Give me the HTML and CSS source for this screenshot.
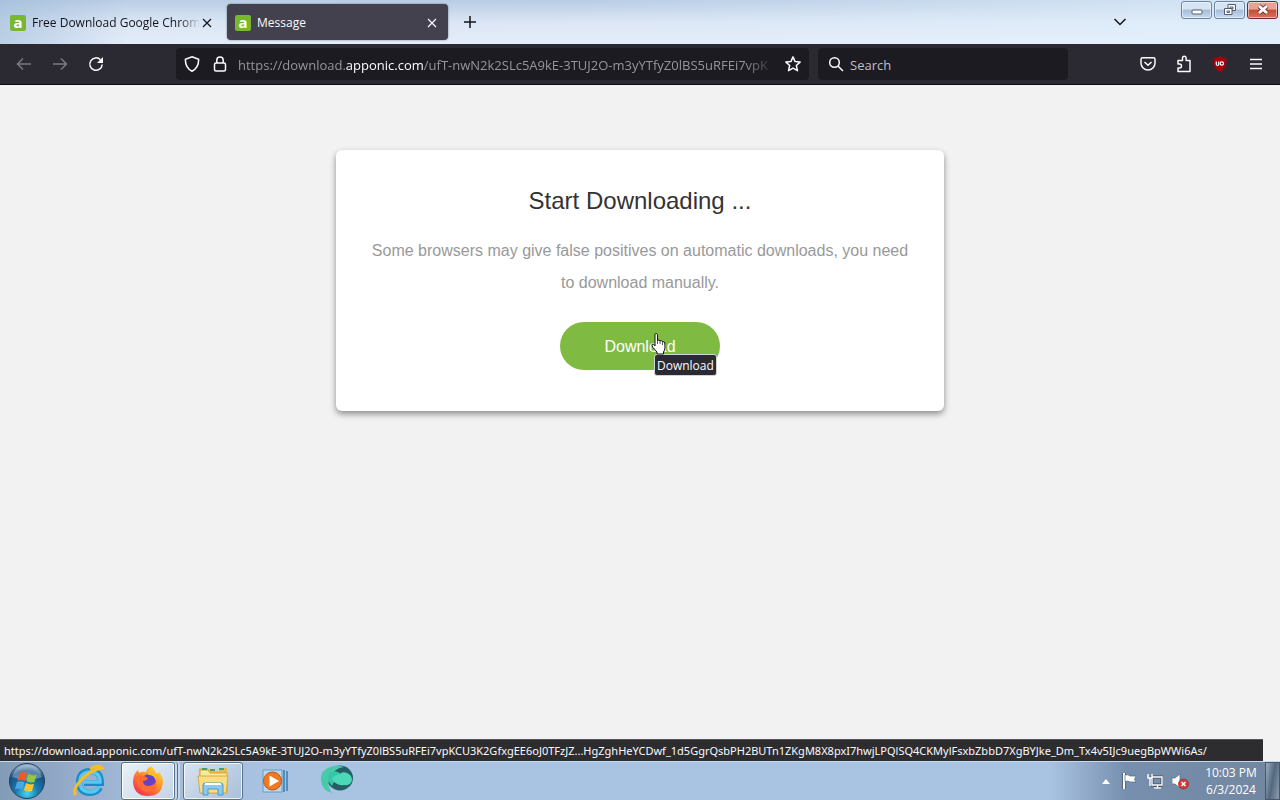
FILE: index.html
```html
<!DOCTYPE html>
<html lang="en">
<head>
<meta charset="utf-8">
<meta name="viewport" content="width=device-width, initial-scale=1">
<title>Message</title>
<link rel="stylesheet" href="styles.css">
</head>
<body>
<header class="titlebar">
  <div class="tabs">
    <div class="tab">
      <span class="favicon">a</span>
      <span class="tab-title tab-title-fade">Free Download Google Chrome</span>
      <button class="icon-btn tab-close" aria-label="Close tab"><svg width="10" height="10" viewBox="0 0 10 10"><path d="M1 1l8 8M9 1l-8 8"/></svg></button>
    </div>
    <div class="tab tab-active">
      <span class="favicon">a</span>
      <span class="tab-title">Message</span>
      <button class="icon-btn tab-close" aria-label="Close tab"><svg width="10" height="10" viewBox="0 0 10 10"><path d="M1 1l8 8M9 1l-8 8"/></svg></button>
    </div>
    <button class="icon-btn new-tab" aria-label="New tab"><svg width="12" height="12" viewBox="0 0 12 12"><path d="M6 0v12M0 6h12"/></svg></button>
  </div>
  <button class="icon-btn all-tabs" aria-label="List all tabs"><svg width="14" height="8" viewBox="0 0 14 8"><path d="M1.500 1L7 6.500 12.500 1"/></svg></button>
  <div class="window-controls">
    <button class="win-btn" aria-label="Minimize"><svg width="14" height="14" viewBox="0 0 14 14"><rect x="2" y="7" width="10" height="4" rx="1" fill="#fff" stroke="#525c73"/></svg></button>
    <button class="win-btn" aria-label="Restore"><svg width="14" height="14" viewBox="0 0 14 14" fill="none"><path d="M5 1.500h7.500v6H5z" fill="#fff" stroke="#525c73"/><path d="M7 4h3v2H7z" stroke="#525c73"/><path d="M1.500 5.500H9v6H1.500z" fill="#fff" stroke="#525c73"/><path d="M4 8h2.500v1.500H4z" stroke="#525c73"/></svg></button>
    <button class="win-btn win-close" aria-label="Close"><svg width="14" height="14" viewBox="0 0 14 14" fill="none"><path d="M3 3l8 7M11 3l-8 7" stroke="#6b3538" stroke-width="4.500"/><path d="M3 3l8 7M11 3l-8 7" stroke="#fff" stroke-width="2.800"/></svg></button>
  </div>
</header>

<nav class="toolbar">
  <div class="nav-buttons">
    <button class="icon-btn dim" aria-label="Back"><svg width="16" height="16" viewBox="0 0 16 16"><path d="M15 8H1.500M7 2.500L1.500 8 7 13.500"/></svg></button>
    <button class="icon-btn dim" aria-label="Forward"><svg width="16" height="16" viewBox="0 0 16 16"><path d="M1 8h13.500M9 2.500L14.500 8 9 13.500"/></svg></button>
    <button class="icon-btn" aria-label="Reload"><svg width="16" height="16" viewBox="0 0 16 16"><path d="M12.500 3.800A6.200 6.200 0 1 0 14.200 8.500"/><path d="M15 1v6H9z" fill="currentColor" stroke="none"/></svg></button>
  </div>
  <div class="address">
    <button class="icon-btn" aria-label="Tracking protection"><svg width="16" height="16" viewBox="0 0 16 16"><path d="M8 .8L14.600 3.300C14.800 8.500 13 12.800 8 15.200 3 12.800 1.200 8.500 1.400 3.300z"/></svg></button>
    <button class="icon-btn" aria-label="Site security"><svg width="16" height="16" viewBox="0 0 16 16"><rect x="2.500" y="7" width="11" height="8" rx="1.500"/><path d="M4.800 7V4.200a3.200 3.200 0 0 1 6.400 0V7"/></svg></button>
    <div class="url">https://download.<b>apponic.com</b>/ufT-nwN2k2SLc5A9kE-3TUJ2O-m3yYTfyZ0lBS5uRFEi7vpK</div>
    <button class="icon-btn" aria-label="Bookmark this page"><svg width="16" height="16" viewBox="0 0 16 16"><path d="M8 .9l2.100 4.700 5 .5-3.800 3.400 1.200 5.200L8 12.100l-4.500 2.600 1.200-5.200L.9 6.100l5-.5z" stroke-linejoin="round"/></svg></button>
  </div>
  <div class="search">
    <svg class="search-icon" width="16" height="16" viewBox="0 0 16 16"><circle cx="6.500" cy="6.500" r="4.800"/><path d="M10 10l5 5"/></svg>
    <input class="search-input" type="text" placeholder="Search" aria-label="Search">
  </div>
  <div class="actions">
    <button class="icon-btn" aria-label="Save to Pocket"><svg width="16" height="16" viewBox="0 0 16 16"><path d="M2.500 1.800h11a1.500 1.500 0 0 1 1.500 1.500V7a7 7 0 0 1-14 0V3.300a1.500 1.500 0 0 1 1.500-1.500zM4.500 6L8 9.300 11.500 6"/></svg></button>
    <button class="icon-btn" aria-label="Extensions"><svg width="16" height="18" viewBox="0 0 16 18"><path d="M2 8V5.500h4.500V3a1.800 1.800 0 0 1 3.600 0v2.500H14V16.500H2V13h1.500a1.900 1.900 0 0 0 0-4H2z" stroke-linejoin="round"/></svg></button>
    <button class="icon-btn" aria-label="uBlock Origin"><svg width="16" height="16" viewBox="0 0 16 16"><path d="M8 0c2 1.400 4.300 2 6.500 2.200C14.800 8.500 13.500 12.800 8 16 2.500 12.800 1.200 8.500 1.500 2.200 3.700 2 6 1.400 8 0z" fill="#a8000a" stroke="none"/><path d="M4.300 5.500v2.800q0 1.200 1.200 1.200t1.200-1.200V5.500" stroke-width="1.200"/><circle cx="9.800" cy="7.500" r="1.700" stroke-width="1.200"/></svg></button>
    <button class="icon-btn" aria-label="Open application menu"><svg width="14" height="12" viewBox="0 0 14 12"><path d="M1 1.500h12M1 6h12M1 10.500h12"/></svg></button>
  </div>
</nav>

<main class="page">
  <section class="card">
    <h1 class="card-title">Start Downloading ...</h1>
    <p class="card-text">Some browsers may give false positives on automatic downloads, you need to download manually.</p>
    <div class="download-wrap">
      <button class="download">Download</button>
      <span class="tooltip" role="tooltip">Download</span>
      <svg class="cursor" width="16" height="22" viewBox="0 0 16 22"><path d="M4 1.500Q4 .5 5 .5t1.500 1V8l.5-1q1.500-.5 2 1 2-.8 2.500.7 2-.5 2.300 1.300l.2 5q-.5 2.500-1.500 4v2H6v-2L2 14.500Q0 11.500 1.500 11T4 13z" fill="#fff" stroke="#111"/><path d="M6.500 7v4M9 8v3M11.500 9v3" stroke="#333" stroke-width=".8"/></svg>
    </div>
  </section>
  <div class="status">https://download.apponic.com/ufT-nwN2k2SLc5A9kE-3TUJ2O-m3yYTfyZ0lBS5uRFEi7vpKCU3K2GfxgEE6oJ0TFzJZ...HgZghHeYCDwf_1d5GgrQsbPH2BUTn1ZKgM8X8pxI7hwjLPQlSQ4CKMylFsxbZbbD7XgBYJke_Dm_Tx4v5IJc9uegBpWWi6As/</div>
</main>

<footer class="taskbar">
  <div class="apps">
    <button class="start" aria-label="Start"><svg width="38" height="38" viewBox="0 0 38 38">
      <defs><radialGradient id="orb" cx="50%" cy="85%" r="80%"><stop offset="0" stop-color="#45d6ee"/><stop offset=".4" stop-color="#197ab0"/><stop offset=".8" stop-color="#1b4d7c"/><stop offset="1" stop-color="#8eabc5"/></radialGradient></defs>
      <circle cx="19" cy="19" r="17.500" fill="url(#orb)" stroke="#24405f"/>
      <path d="M4 15Q8 3 19 3t15 12Q19 21 4 15z" fill="#d9e9f5" opacity=".35"/>
      <path d="M12 11q4-2 7 .5l-2 7.500q-4-2-7.500-.3z" fill="#ef5b28"/><path d="M20.500 12q4 2.500 8 .8l-2 7.200q-4 1.500-8-.8z" fill="#91c83e"/><path d="M9 20q4-1.800 7.500.3l-2 7.300q-4-2-7.500-.5z" fill="#4aa6e8"/><path d="M18 21q4 2.300 8 1l-2 7q-4 1.500-8-1z" fill="#ffc62e"/></svg></button>
    <button class="app" aria-label="Internet Explorer"><svg width="34" height="34" viewBox="0 0 34 34" fill="none">
      <path d="M28 23.500Q25 29 18 29 7 28.500 7 18T18 7q11 0 11 12H12" stroke="#1c8bc9" stroke-width="6"/><path d="M27 23Q24 28 18 28 8 27.500 8 18T18 8q10 0 10 10H12" stroke="#58c7f1" stroke-width="3.500"/><path d="M4 31C-2 25 14 7 30 4q-3-4-12 1" stroke="#f4be29" stroke-width="3"/></svg></button>
    <button class="app app-open app-stacked" aria-label="Firefox"><svg width="32" height="32" viewBox="0 0 32 32">
      <defs><linearGradient id="fox" x1=".9" y1="0" x2=".2" y2="1"><stop offset="0" stop-color="#ffe646"/><stop offset=".45" stop-color="#ff9428"/><stop offset="1" stop-color="#f22b56"/></linearGradient></defs>
      <path d="M19 1q4 3 5 7 2 .5 3-1 4 5 4 10Q30 31 16 31T1 17Q1 9 6 5l1 3q3-2 7-1Q15 3 19 1z" fill="url(#fox)"/><circle cx="17" cy="16" r="7" fill="#6741c3"/><path d="M4 12q4-3 8-1l4 2q-1 3-5 3 0 5 6 5 6-1 7-5 1 10-8 11Q6 27 4 12z" fill="#ff6b32"/><path d="M17 4q8 5 7 12-2-7-8-6z" fill="#ffbb31"/></svg></button>
    <button class="app app-open app-idle" aria-label="Windows Explorer"><svg width="34" height="32" viewBox="0 0 34 32">
      <path d="M3 3h9l2 3h9l1-3h7v24H3z" fill="#e6bb51"/><path d="M4 5h8l2 3h17v20H4z" fill="#fbe99a" stroke="#d6a63c"/><path d="M6 4h5M14 5h5M23 4h5" stroke="#4a9e68" stroke-width="2"/><path d="M2 11h30l-2 17H4z" fill="#f8df82" stroke="#d3aa4b"/><path d="M7 30V20q0-2 2-2h16q2 0 2 2v10h-5v-6H12v6z" fill="#8cc9ed" stroke="#4a98c9"/><path d="M9 19h16" stroke="#fff" stroke-width="2"/></svg></button>
    <button class="app app-media" aria-label="Windows Media Player"><svg width="28" height="26" viewBox="0 0 28 26">
      <path d="M2 2h19v22H2z" fill="#b9d8ec" stroke="#5e9fc9"/><path d="M23 2v22M26 3v20" stroke="#377eaa" stroke-width="1.500"/><circle cx="11.500" cy="13" r="9" fill="#ef7a22" stroke="#c95314"/><path d="M8.500 7.500v11L18 13z" fill="#fff"/></svg></button>
    <button class="app" aria-label="Web browser"><svg width="34" height="32" viewBox="0 0 34 32">
      <ellipse cx="20" cy="13" rx="13" ry="12.500" fill="#235f65"/><path d="M10 2Q0 6 1 15q1 11 11 13-5-7-3-12Q13 3 24 2q-7-3-14 0z" fill="#48c9aa"/><path d="M9 8q7-4 12 1-6 5-9 12-6-6-3-13z" fill="#35c7a5"/><path d="M12 14q2-4 8-5 2-3 7-1 5 2 5 7-1 6-8 5-8 1-12-6z" fill="#4bd9b8"/></svg></button>
  </div>
  <div class="tray">
    <svg class="tray-arrow" width="8" height="5" viewBox="0 0 8 5"><path d="M4 0l4 5H0z" fill="#fff"/></svg>
    <svg width="16" height="16" viewBox="0 0 16 16"><path d="M2 0v16" stroke="#46586e" stroke-width="3.500"/><path d="M2 0v16" stroke="#fff" stroke-width="2"/><path d="M3 2q3-1 5 1h6l-1.500 3.500L14 9H8Q6 7.500 3 8.500z" fill="#fff" stroke="#53677f" stroke-width=".7"/></svg>
    <svg width="16" height="16" viewBox="0 0 16 16" fill="none"><path d="M5 4h10v8H5zM7 15h7M10.500 12v3" stroke="#3d4f64" stroke-width="3"/><path d="M5 4h10v8H5zM7 15h7M10.500 12v3M1 1v4h4V1M3 5v8" stroke="#fff" stroke-width="1.400"/></svg>
    <svg width="17" height="17" viewBox="0 0 17 17"><path d="M0 5h3l5-4v14l-5-4H0z" fill="#fff" stroke="#52677f" stroke-width=".7"/><circle cx="11.500" cy="11" r="5" fill="#d53b39" stroke="#9b2428" stroke-width=".7"/><path d="M9.500 9l4 4M13.500 9l-4 4" stroke="#fff" stroke-width="1.500"/></svg>
    <div class="clock"><span>10:03 PM</span><span>6/3/2024</span></div>
    <button class="show-desktop" aria-label="Show desktop"></button>
  </div>
</footer>
</body>
</html>
```
FILE: styles.css
```css
* { box-sizing: border-box; }

body {
  margin: 0;
  height: 100vh;
  display: flex;
  flex-direction: column;
  overflow: hidden;
  font: 12px/16px "Open Sans", "Noto Sans", sans-serif;
}

button {
  margin: 0;
  padding: 0;
  border: 0;
  background: none;
  color: inherit;
  font: inherit;
}

svg { display: block; flex: none; }

.icon-btn {
  flex: none;
  width: 16px;
  height: 20px;
  display: flex;
  align-items: center;
  justify-content: center;
}

.icon-btn svg, .search-icon {
  fill: none;
  stroke: currentColor;
  stroke-width: 1.5;
}

/* Tab strip */
.titlebar {
  flex: none;
  height: 44px;
  display: flex;
  background: linear-gradient(90deg, rgba(157,186,216,.6), rgba(205,221,241,.1) 10%, transparent 45%, rgba(225,240,252,.7)), linear-gradient(#b8cce4, #dbe6f5 50%, #e6eefa);
  color: #15141a;
}

.tabs { flex: 1; display: flex; min-width: 0; padding: 4px 0; }

.tab {
  width: 221px;
  height: 36px;
  padding: 0 11px 0 8px;
  margin-right: 1px;
  display: flex;
  align-items: center;
  gap: 6px;
  border-radius: 4px;
}

.tab:first-child { width: 226px; padding: 2px 14px 0 10px; }

.tab-active {
  padding-top: 2px;
  background: #42414d;
  color: #fbfbfe;
  box-shadow: 0 0 2px rgba(0,0,0,.5);
}

.favicon {
  flex: none;
  width: 16px;
  height: 16px;
  border-radius: 2px;
  background: #78b72f;
  color: #fff;
  font: bold 15px/14px "Open Sans", sans-serif;
  text-align: center;
}

.tab-title { flex: 1; min-width: 0; overflow: hidden; white-space: nowrap; }
.tab-title-fade { margin-right: -4px; mask-image: linear-gradient(90deg, #000 88%, transparent); }
.tab-close { width: 10px; }
.tab-close svg { stroke-width: 1.2; }
.new-tab { width: 42px; height: 36px; }
.all-tabs { width: 16px; height: 44px; margin-right: 53px; }

.window-controls { display: flex; gap: 2px; padding-right: 2px; }

.win-btn {
  width: 31px;
  height: 18px;
  margin-top: 1px;
  display: flex;
  align-items: center;
  justify-content: center;
  border: 1px solid #6b84a5;
  border-radius: 3px;
  background: linear-gradient(#d5e3f3 45%, #a6bcd7 50%, #c7dbef);
  box-shadow: inset 0 0 0 1px rgba(255,255,255,.5);
}

.win-close {
  border-color: #652e35;
  background: linear-gradient(#e7a294 45%, #c74935 50%, #d7755b);
}

/* Navigation toolbar */
.toolbar {
  flex: none;
  height: 41px;
  display: flex;
  align-items: center;
  background: #2b2a33;
  border-bottom: 1px solid #0c0c0d;
  color: #fbfbfe;
  font-size: 13px;
  line-height: 20px;
}

.nav-buttons { display: flex; gap: 20px; padding: 0 72px 0 16px; }
.dim { color: #7a7982; }

.address {
  flex: 1;
  min-width: 0;
  height: 32px;
  padding: 0 8px;
  display: flex;
  align-items: center;
  gap: 12px;
  border-radius: 4px;
  background: #1c1b22;
}

.url {
  flex: 1;
  margin: 0 -4px 0 -2px;
  padding-top: 1px;
  min-width: 0;
  overflow: hidden;
  white-space: nowrap;
  color: #96959d;
  mask-image: linear-gradient(90deg, #000 94%, transparent);
}

.url b { font-weight: 400; color: #fbfbfe; }

.search {
  flex: none;
  width: 250px;
  height: 32px;
  margin-left: 9px;
  padding: 0 10px;
  display: flex;
  align-items: center;
  gap: 6px;
  border-radius: 4px;
  background: #1c1b22;
}

.search-input {
  flex: 1;
  min-width: 0;
  padding: 1px 0 0;
  border: 0;
  background: none;
  color: #fbfbfe;
  font: 13px/20px "Open Sans", sans-serif;
}

.search-input::placeholder { color: #c0bfc6; opacity: 1; }
.actions { display: flex; gap: 20px; padding: 0 16px 0 72px; }

/* Page */
.page {
  position: relative;
  flex: 1;
  min-height: 0;
  padding: 65px 16px 0;
  background: #f2f2f2;
  font-family: "Liberation Sans", Arial, sans-serif;
}

.card {
  max-width: 608px;
  margin: 0 auto;
  padding: 32px 32px 41px;
  border-radius: 6px;
  background: #fff;
  box-shadow: 0 3px 6px rgba(0,0,0,.42);
  text-align: center;
}

.card-title { margin: 0; color: #333; font-size: 24px; line-height: 38px; font-weight: 400; }
.card-text { margin: 15px 0 23px; color: #999; font-size: 16px; line-height: 32px; }

.download-wrap { position: relative; width: 160px; margin: 0 auto; }

.download {
  width: 160px;
  height: 48px;
  padding-top: 1px;
  border-radius: 24px;
  background: #7fba42;
  color: #fff;
  font-size: 16px;
}

.tooltip {
  position: absolute;
  left: 94px;
  top: 32px;
  padding: 3px 2px 1px;
  border: 1px solid #d4d4d8;
  border-radius: 3px;
  background: #2b2a33;
  color: #fbfbfe;
  font-family: "Open Sans", sans-serif;
}

.cursor { position: absolute; left: 91px; top: 11px; }

.status {
  position: absolute;
  left: 0;
  bottom: 0;
  min-width: calc(100% - 17px);
  max-width: 100%;
  padding: 3px 13px 2px 4px;
  overflow: hidden;
  white-space: nowrap;
  border-top: 1px solid #55555a;
  background: #2d2d30;
  color: #fbfbfe;
  font-family: "Noto Sans", "Open Sans", sans-serif;
  font-size: 11px;
}

/* Taskbar */
.taskbar {
  flex: none;
  height: 39px;
  display: flex;
  justify-content: space-between;
  border-top: 1px solid #c5daee;
  background: linear-gradient(90deg, #829bb7, #a2b9d7 10%, #a9c3e2 22%, #a9c3e2 82%, #778fae 88%, #71869f);
}

.apps { display: flex; align-items: center; }
.start { width: 54px; padding-left: 8px; }

.app {
  width: 60px;
  height: 38px;
  margin-right: 2px;
  display: flex;
  align-items: center;
  justify-content: center;
  border: 1px solid transparent;
  border-radius: 3px;
}

.app:nth-child(2) { width: 65px; padding-left: 5px; }

.app-open {
  border-color: #5a718c;
  background: linear-gradient(135deg, #eaf1f8, #c3d3e6);
  box-shadow: inset 0 0 0 1px rgba(255,255,255,.75);
}

.app-stacked { width: 54px; margin-right: 8px; box-shadow: inset 0 0 0 1px #fff, 2px 0 #c7d8ea, 3px 0 #5a718c, 5px 0 #c7d8ea; }
.app-idle { background: linear-gradient(135deg, #d7e3f0, #a9bfd9); }

.tray { display: flex; align-items: center; gap: 9px; color: #fff; }
.tray-arrow { margin-right: 3px; }
.clock { width: 66px; display: flex; flex-direction: column; align-items: center; line-height: 17px; }

.show-desktop {
  width: 15px;
  height: 38px;
  margin-left: -8px;
  border: 1px solid #48586b;
  background: linear-gradient(100deg, #9badbf, #53687f 50%, #8d9db0);
}
```
